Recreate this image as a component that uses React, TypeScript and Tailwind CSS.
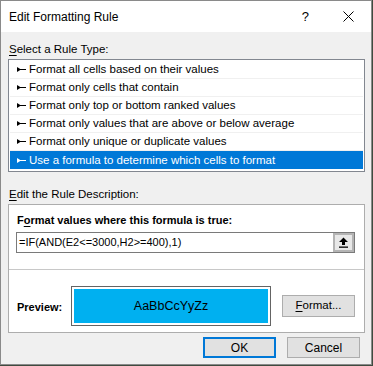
import React from "react";

const ruleTypes = [
  "Format all cells based on their values",
  "Format only cells that contain",
  "Format only top or bottom ranked values",
  "Format only values that are above or below average",
  "Format only unique or duplicate values",
  "Use a formula to determine which cells to format",
];

function RuleArrow({ color }: { color: string }) {
  return (
    <svg width="9" height="7" viewBox="0 0 9 7" className="shrink-0">
      <polygon points="0,1 4,3.5 0,6" fill={color} />
      <rect x="3" y="3" width="6" height="1" fill={color} />
    </svg>
  );
}

export default function App() {
  const selected = 5;

  return (
    <div className="w-[373px] h-[366px] bg-[#3f4b3f] overflow-hidden font-['Liberation_Sans',Arial,sans-serif] text-[11.5px] text-black">
      <div className="w-[372px] h-[365px] border border-[#8a8a8a] bg-[#f0f0f0] flex flex-col">
        {/* title bar */}
        <div className="h-[31px] bg-white flex items-center pl-[8px] pr-[17px] shrink-0">
          <span className="text-[12px] leading-none">Edit Formatting Rule</span>
          <span className="ml-auto mr-[34px] text-[13px] leading-none">?</span>
          <svg width="11" height="11" viewBox="0 0 11 11">
            <path d="M0.5 0.5 L10.5 10.5 M10.5 0.5 L0.5 10.5" stroke="#000" strokeWidth="1" />
          </svg>
        </div>

        <div className="pl-[7px] pr-[6px] flex flex-col">
          <div className="h-[27px] pt-[9px] pl-[1px] leading-[16px]">
            <span className="underline underline-offset-2">S</span>elect a Rule Type:
          </div>

          {/* rule list */}
          <div className="border border-[#828790] bg-white p-[1px] pb-[2px]">
            {ruleTypes.map((t, i) => (
              <div
                key={t}
                className={
                  i === selected
                    ? "h-[18px] flex items-center gap-[3px] pl-[7px] bg-[#0078d7] text-white"
                    : "h-[18px] flex items-center gap-[3px] pl-[7px] border-b border-[#f0f0f0]"
                }
              >
                <RuleArrow color={i === selected ? "#fff" : "#000"} />
                <span className="leading-none pt-[1px]">{t}</span>
              </div>
            ))}
          </div>

          <div className="h-[32px] pt-[14px] pl-[1px] leading-[16px]">
            <span className="underline underline-offset-2">E</span>dit the Rule Description:
          </div>

          {/* description panel */}
          <div className="border border-[#adadad] bg-white flex flex-col">
            <div className="h-[64px] pl-[7px] pr-[9px] pt-[7px] flex flex-col">
              <div className="font-bold text-[11px] leading-[16px] pl-[1px]">
                F<span className="underline underline-offset-2">o</span>rmat values where this formula is true:
              </div>
              <div className="mt-[4px] h-[21px] border border-[#7a7a7a] flex items-center pl-[2px]">
                <span className="leading-none text-[11px]">=IF(AND(E2&lt;=3000,H2&gt;=400),1)</span>
                <div className="ml-auto h-[19px] w-[21px] border-2 border-[#b4b4b4] bg-[#e8e8e8] flex items-center justify-center">
                  <svg width="11" height="11" viewBox="0 0 11 11">
                    <polygon points="5.5,0.5 10,5 7,5 7,8 4,8 4,5 1,5" fill="#000" />
                    <rect x="1" y="9.5" width="9" height="1.3" fill="#000" />
                  </svg>
                </div>
              </div>
            </div>
            <div className="h-px bg-[#c8c8c8]" />
            <div className="h-[62px] pl-[8px] pr-[9px] pt-[16px]">
              <div className="h-[40px] flex items-center">
                <span className="font-bold text-[11px] w-[54px] pt-[2px]">Preview:</span>
                <div className="w-[200px] h-[40px] border border-[#646464] bg-white p-[2px]">
                  <div className="h-full bg-[#00b0f0] flex items-center justify-center text-[12.5px]">
                    AaBbCcYyZz
                  </div>
                </div>
                <button className="ml-auto w-[73px] h-[22px] border border-[#adadad] bg-[#e1e1e1]">
                  <span className="underline underline-offset-2">F</span>ormat...
                </button>
              </div>
            </div>
          </div>

          {/* footer buttons */}
          <div className="flex justify-end gap-[11px] mt-[4px] pr-[5px]">
            <button className="w-[73px] h-[21px] border-2 border-[#0078d7] bg-[#e1e1e1] text-[12px]">OK</button>
            <button className="w-[73px] h-[21px] border border-[#adadad] bg-[#e1e1e1] text-[12px]">Cancel</button>
          </div>
        </div>
      </div>
    </div>
  );
}
